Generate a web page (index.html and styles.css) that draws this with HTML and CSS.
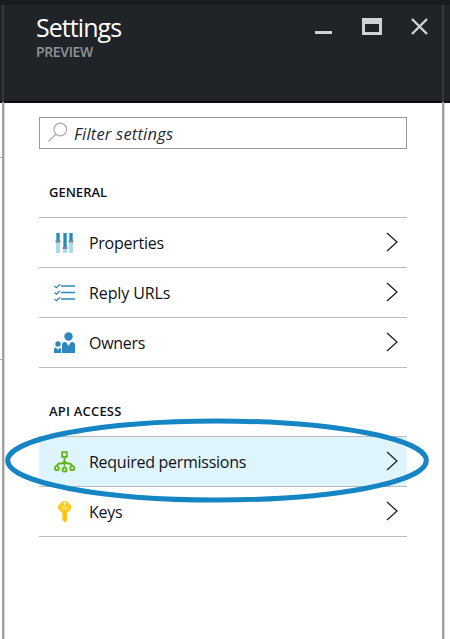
FILE: index.html
```
<!DOCTYPE html>
<html lang="en">
<head>
<meta charset="utf-8">
<title>Settings</title>
<link rel="stylesheet" href="styles.css">
</head>
<body>
<div class="blade">
  <header class="header">
    <div>
      <h1 class="title">Settings</h1>
      <p class="subtitle">PREVIEW</p>
    </div>
    <svg class="controls" width="114" height="20" viewBox="0 0 114 20">
      <path d="M0 15.500h17" stroke="#d0d3d4" stroke-width="3"/>
      <path fill="#d0d3d4" fill-rule="evenodd" d="M47 1h20v17H47zM50 7v8h14V7z"/>
      <path d="M97 2l15 15M112 2L97 17" stroke="#d0d3d4" stroke-width="2.4"/>
    </svg>
  </header>
  <main class="content">
    <div class="search">
      <svg width="22" height="22" viewBox="0 0 22 22" fill="none" stroke="#aaa" stroke-width="1.2"><circle cx="12.300" cy="7.500" r="6.300"/><path d="M8 12L.3 19.500"/></svg>
      <span class="hint">Filter settings</span>
    </div>
    <section class="group">
      <h2 class="heading">GENERAL</h2>
      <ul class="list">
        <li class="row">
          <svg class="icon" width="22" height="22" viewBox="0 0 22 22">
            <path fill="#a5dcf0" d="M2 1h4v20H2zM9 1h4v20H9zM15 1h4v20h-4z"/>
            <path fill="#2b88be" d="M2.500 1h3v8h-3zM9.500 1h3v14h-3zM15.500 1h3v8h-3z"/>
            <path fill="#858b8e" d="M1.500 8.500h5v2h-5zM8.500 15h5v2h-5zM14.500 8.500h5v2h-5z"/>
          </svg>
          <span class="label">Properties</span>
          <svg class="chevron" width="13" height="20" viewBox="0 0 13 20"><path d="M1 1l10 9-10 9"/></svg>
        </li>
        <li class="row">
          <svg class="icon" width="22" height="22" viewBox="0 0 22 22" fill="none" stroke="#2b88be">
            <path stroke-width="1.700" d="M7 4h14M7 10.500h14M7 17h14"/>
            <path stroke-width="1.300" d="M.5 4l2 1.700L6 2.200M.5 10.500l2 1.700L6 8.700M.5 17l2 1.700L6 15.200"/>
          </svg>
          <span class="label label-urls">Reply URLs</span>
          <svg class="chevron" width="13" height="20" viewBox="0 0 13 20"><path d="M1 1l10 9-10 9"/></svg>
        </li>
        <li class="row">
          <svg class="icon" width="22" height="22" viewBox="0 0 22 22" fill="#2b88be">
            <circle cx="14.500" cy="4.500" r="4.200"/>
            <path d="M8 21V13q0-3 3-3h1l2.500 4 2.500-4h1q3 0 3 3v8z"/>
            <circle cx="4" cy="12" r="2.700"/>
            <path d="M0 21v-3.500Q0 15.500 2 15.500L4 18l2-2.500q1 0 1 2V21z"/>
          </svg>
          <span class="label">Owners</span>
          <svg class="chevron" width="13" height="20" viewBox="0 0 13 20"><path d="M1 1l10 9-10 9"/></svg>
        </li>
      </ul>
    </section>
    <section class="group">
      <h2 class="heading heading-api">API ACCESS</h2>
      <ul class="list">
        <li class="row selected">
          <svg class="icon" width="22" height="22" viewBox="0 0 22 22" fill="none" stroke="#5fb511" stroke-width="1.800">
            <path d="M8.200 1.200h4.600v4.600H8.200zM10.500 6v9.500M10.500 9.500q-.5 3-4 3Q3 12.500 3 15.500M10.500 9.500q.5 3 4 3 3.500 0 3.500 3"/>
            <circle cx="2.800" cy="17.200" r="2"/><circle cx="10.500" cy="18.700" r="2"/><circle cx="18.300" cy="17.200" r="2"/>
          </svg>
          <span class="label">Required permissions</span>
          <svg class="chevron" width="13" height="20" viewBox="0 0 13 20"><path d="M1 1l10 9-10 9"/></svg>
          <svg class="ring" width="424" height="86" viewBox="0 0 424 86"><ellipse cx="212" cy="43.500" rx="209.300" ry="39.500"/></svg>
        </li>
        <li class="row">
          <svg class="icon" width="22" height="22" viewBox="0 0 22 22">
            <path fill="#fcc914" fill-rule="evenodd" d="M8.500.3h4.300l4.400 4.700v2.500L13 12.300v7.200l-2.200 2L8.300 19v-6.700L4 7.500V5zM10.700 1.300a1.300 1.300 0 1 0 .01 0z"/>
            <path d="M7 6h7.600M7.500 7.800h6.600" stroke="#fff0a5" stroke-width=".8"/>
            <path d="M10.700 13v7" stroke="#efb616" stroke-width=".8"/>
          </svg>
          <span class="label">Keys</span>
          <svg class="chevron" width="13" height="20" viewBox="0 0 13 20"><path d="M1 1l10 9-10 9"/></svg>
        </li>
      </ul>
    </section>
  </main>
  <i class="edge edge-left"></i>
  <i class="edge edge-right"></i>
  <i class="tick tick-upper"></i>
  <i class="tick tick-lower"></i>
</div>
</body>
</html>
```

FILE: styles.css
```
* { box-sizing: border-box; }
body {
  margin: 0;
  background: #fff;
  color: #101118;
  font-family: "Open Sans", "Noto Sans", sans-serif;
}
h1, h2, p, ul { margin: 0; padding: 0; font-weight: 400; }
.blade { position: relative; height: 639px; overflow: hidden; }
.header {
  display: flex;
  justify-content: space-between;
  height: 103px;
  padding: 10px 21px 0 36px;
  background: #202328;
  border-top: 5px solid #191c1e;
  border-bottom: 2px solid #090a0c;
}
.title { height: 24px; font-size: 25px; line-height: 24px; letter-spacing: -.95px; color: #fff; }
.subtitle { margin-top: 4px; font-size: 14px; font-weight: 600; line-height: 18px; letter-spacing: -.35px; color: #919497; }
.controls { margin-top: 2px; }
.content { padding: 14px 43px 0 39px; }
.search {
  display: flex;
  align-items: center;
  height: 32px;
  padding-left: 8px;
  border: 1px solid #999;
}
.hint { margin-left: 4px; font-size: 16.5px; font-style: italic; letter-spacing: .2px; color: #272a35; }
.group { padding-top: 33px; }
.heading { height: 35px; padding-left: 10px; font-size: 13px; font-weight: 600; line-height: 20px; }
.heading-api { letter-spacing: .2px; }
.list { list-style: none; border-top: 1px solid #bbb; }
.row {
  position: relative;
  display: flex;
  align-items: center;
  height: 50px;
  padding: 0 8px 0 15px;
  border-bottom: 1px solid #bbb;
}
.selected { background: #dff5fe; }
.icon { flex: none; }
.label { flex: 1; margin-left: 13px; font-size: 16px; line-height: 24px; letter-spacing: -.27px; }
.label-urls { letter-spacing: -.1px; }
.chevron { margin-bottom: 2px; fill: none; stroke: #20212a; stroke-width: 1.3; }
.ring { position: absolute; left: -34px; top: -20px; z-index: 2; fill: none; stroke: #1685c3; stroke-width: 5; }
.edge { position: absolute; top: 5px; bottom: 0; width: 2px; background: linear-gradient(#34373b 97px, #a0a0a0 97px); }
.edge::after { content: ""; position: absolute; top: 98px; bottom: 0; left: 2px; width: 1px; background: #d5d5d5; }
.edge-left { left: 2px; }
.edge-right { left: 442px; }
.tick { position: absolute; left: 0; width: 2px; height: 1px; background: #aaa; }
.tick-upper { top: 157px; }
.tick-lower { top: 359px; }
```
